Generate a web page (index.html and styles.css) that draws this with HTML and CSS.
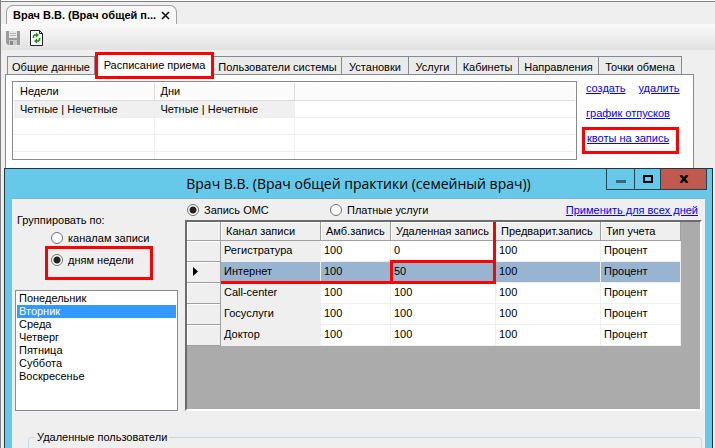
FILE: index.html
```html
<!DOCTYPE html>
<html lang="ru">
<head>
<meta charset="utf-8">
<title>Врач В.В.</title>
<link rel="stylesheet" href="styles.css">
</head>
<body>
<div class="workspace">
  <header class="doc-bar">
    <div class="doc-tab">
      <span class="doc-title">Врач В.В. (Врач общей п...</span>
      <button class="icon-button" aria-label="Закрыть вкладку">
        <svg width="9" height="9" viewBox="0 0 9 9"><path d="M1 1l7 7M8 1L1 8" stroke="#111" stroke-width="1.6"/></svg>
      </button>
    </div>
  </header>
  <div class="toolbar">
    <button class="icon-button" aria-label="Сохранить" disabled>
      <svg width="14" height="14" viewBox="0 0 14 14"><path d="M0 0h14v14H2l-2-2z" fill="#9b9b9b"/><path d="M3 0h8v7H3z" fill="#e8e8e8"/><path d="M4 2.500h6M4 4.500h6" stroke="#b5b5b5"/><path d="M3 9h8v5H3z" fill="#c9c9c9"/><path d="M4 10h3v4H4z" fill="#8c8c8c"/></svg>
    </button>
    <button class="icon-button" aria-label="Обновить">
      <svg width="14" height="16" viewBox="0 0 14 16"><path d="M.5.5h9l3 3v12H.5z" fill="#fff" stroke="#222"/><path d="M9.500.5v3h3z" fill="#ddd" stroke="#222"/><path d="M3.500 8V6l1-1H7" fill="none" stroke="#168a16" stroke-width="1.600"/><path d="M6 2.500l3 2.500-3 2.500z" fill="#168a16"/><path d="M9.500 8v2l-1 1H7" fill="none" stroke="#168a16" stroke-width="1.600"/><path d="M7 8.500v5L4 11z" fill="#168a16"/></svg>
    </button>
  </div>

  <main class="page">
    <nav class="tabs">
      <button class="tab w-general">Общие данные</button>
      <button class="tab tab-active w-schedule">Расписание приема</button>
      <button class="tab w-users">Пользователи системы</button>
      <button class="tab w-setup">Установки</button>
      <button class="tab w-services">Услуги</button>
      <button class="tab w-rooms">Кабинеты</button>
      <button class="tab w-referrals">Направления</button>
      <button class="tab w-points">Точки обмена</button>
    </nav>
    <section class="panel">
      <div class="weeks-box">
        <table class="weeks">
          <thead><tr><th class="week-col">Недели</th><th class="week-col">Дни</th><th></th></tr></thead>
          <tbody>
            <tr class="filled"><td>Четные | Нечетные</td><td>Четные | Нечетные</td><td></td></tr>
            <tr><td></td><td></td><td></td></tr>
            <tr><td></td><td></td><td></td></tr>
            <tr class="last"><td></td><td></td><td></td></tr>
          </tbody>
        </table>
      </div>
      <div class="actions">
        <div class="action-row"><a href="#">создать</a><a href="#">удалить</a></div>
        <a href="#">график отпусков</a>
        <a href="#" class="marked-link">квоты на запись</a>
      </div>
    </section>
  </main>
</div>

<section class="dialog" role="dialog" aria-labelledby="dialog-title">
  <header class="titlebar">
    <h1 id="dialog-title">Врач В.В. (Врач общей практики (семейный врач))</h1>
    <div class="window-buttons">
      <button class="win minimize" aria-label="Свернуть"><svg width="10" height="10" viewBox="0 0 10 10"><path d="M0 6h10v3H0z" fill="#386878"/></svg></button>
      <button class="win maximize" aria-label="Развернуть"><svg width="10" height="8" viewBox="0 0 10 8"><path d="M1 1h8v6H1z" fill="none" stroke="#000" stroke-width="2"/></svg></button>
      <button class="win close" aria-label="Закрыть"><svg width="10" height="8" viewBox="0 0 10 8"><path d="M1.500 0l7 8M8.500 0l-7 8" stroke="#000" stroke-width="2.400"/></svg></button>
    </div>
  </header>
  <div class="dialog-body">
    <div class="columns">
      <div class="grouping">
        <div class="caption">Группировать по:</div>
        <div class="choices">
          <label class="choice"><input type="radio" name="group">каналам записи</label>
          <label class="choice marked-choice"><input type="radio" name="group" checked>дням недели</label>
        </div>
        <select class="days" size="9" aria-label="Дни недели">
          <option>Понедельник</option>
          <option class="picked">Вторник</option>
          <option>Среда</option>
          <option>Четверг</option>
          <option>Пятница</option>
          <option>Суббота</option>
          <option>Воскресенье</option>
        </select>
      </div>
      <div class="quotas">
        <div class="quota-head">
          <label class="choice first-kind"><input type="radio" name="kind" checked>Запись ОМС</label>
          <label class="choice"><input type="radio" name="kind">Платные услуги</label>
          <a href="#">Применить для всех дней</a>
        </div>
        <div class="grid-box">
          <table class="grid">
            <colgroup><col class="c-mark"><col class="c-channel"><col class="c-amb"><col class="c-wide"><col class="c-wide"><col class="c-type"></colgroup>
            <thead><tr><th></th><th>Канал записи</th><th>Амб.запись</th><th class="mark-side">Удаленная запись</th><th>Предварит.запись</th><th>Тип учета</th></tr></thead>
            <tbody>
              <tr><th></th><td>Регистратура</td><td>100</td><td class="mark-side">0</td><td>100</td><td>Процент</td></tr>
              <tr class="current"><th><svg width="5" height="9" viewBox="0 0 5 9"><path d="M0 0l5 4.500L0 9z"/></svg></th><td class="mark-base">Интернет</td><td class="mark-base">100</td><td class="mark-cell">50</td><td>100</td><td>Процент</td></tr>
              <tr><th></th><td>Call-center</td><td>100</td><td>100</td><td>100</td><td>Процент</td></tr>
              <tr><th></th><td>Госуслуги</td><td>100</td><td>100</td><td>100</td><td>Процент</td></tr>
              <tr><th></th><td>Доктор</td><td>100</td><td>100</td><td>100</td><td>Процент</td></tr>
            </tbody>
          </table>
        </div>
      </div>
    </div>
    <fieldset class="removed"><legend>Удаленные пользователи</legend></fieldset>
  </div>
</section>
</body>
</html>
```
FILE: styles.css
```css
* { box-sizing: border-box; }

body {
  margin: 0;
  height: 100vh;
  position: relative;
  overflow: hidden;
  background: #efefef;
  color: #000;
  font: 11px/16px "Liberation Sans", Arial, sans-serif;
}

button, select { font: inherit; color: inherit; }
a { color: #00f; }

.icon-button { display: flex; padding: 0; border: 0; background: none; }

/* Main window */
.workspace {
  height: 100%;
  display: flex;
  flex-direction: column;
  border-left: 1px solid #808080;
}
.doc-bar { height: 24px; padding: 4px 0 0 5px; border-top: 1px solid #fff; box-shadow: inset 0 1px #808080; }
.doc-tab {
  width: 171px;
  height: 19px;
  display: flex;
  align-items: center;
  justify-content: space-between;
  padding: 0 6px;
  border: 1px solid #a0a0a0;
  border-bottom: 0;
  border-radius: 7px 7px 0 0;
  background: #f8f8f8;
}
.doc-title { font-weight: bold; white-space: nowrap; }
.toolbar {
  height: 26px;
  display: flex;
  align-items: center;
  gap: 10px;
  padding: 2px 5px 0;
  background: linear-gradient(#fafafa, #e2e2e2);
}
.page { flex: 1; display: flex; flex-direction: column; padding: 6px 21px 0 4px; }
.tabs { display: flex; height: 18px; padding-left: 2px; }
.tab {
  height: 18px;
  padding: 2px 0 0;
  border: 1px solid #868a92;
  border-bottom: 0;
  border-left: 0;
  background: #ebebeb;
  line-height: 16px;
  white-space: nowrap;
}
.w-general { width: 88px; border-left: 1px solid #868a92; }
.w-schedule { width: 119px; }
.w-users { width: 128px; }
.w-setup { width: 67px; }
.w-services { width: 48px; }
.w-rooms { width: 62px; }
.w-referrals { width: 80px; }
.w-points { width: 83px; }
.tab-active {
  height: 27px;
  margin-top: -4px;
  padding: 0 0 2px;
  border: 3px solid #f00;
  background: #fff;
  z-index: 1;
}
.panel {
  flex: 1;
  display: flex;
  gap: 5px;
  padding: 6px;
  border: 1px solid #868a92;
  border-bottom: 0;
  background: #fff;
}
.weeks-box { flex: 1; height: 79px; padding: 1px; border: 1px solid #868a92; overflow: hidden; }
.weeks { width: 100%; table-layout: fixed; border-collapse: collapse; }
.weeks th, .weeks td {
  height: 17px;
  padding: 0 6px;
  border: 1px solid #eee;
  border-width: 0 1px 1px 0;
  text-align: left;
  font-weight: normal;
  line-height: 16px;
}
.weeks th { background: #fbfbfb; border-color: #ddd; }
.weeks .last td { border-bottom: 0; }
.weeks tr > :last-child { border-right: 0; }
.week-col { width: 140px; }
.filled td { background: #f0f0f0; }
.filled td:last-child { background: #fff; }
.actions { width: 105px; display: flex; flex-direction: column; align-items: flex-start; }
.actions > a { margin: 9px 0 0 4px; white-space: nowrap; }
.action-row { display: flex; gap: 13px; padding-left: 4px; height: 15px; line-height: 14px; }
.actions > .marked-link { width: 97px; height: 27px; margin: 6px 0 0; padding: 0 0 0 2px; border: 3px solid #f00; }

/* Dialog */
.dialog {
  position: absolute;
  inset: 168px 2px 0 4px;
  display: flex;
  flex-direction: column;
  padding: 0 7px;
  border: 1px solid #26343b;
  border-bottom: 0;
  background: #66c9ea;
}
.titlebar { position: relative; height: 29px; display: flex; justify-content: center; }
.titlebar h1 { margin: 0; font: 14px/30px "Open Sans", "Noto Sans", sans-serif; white-space: nowrap; }
.window-buttons { position: absolute; top: 0; right: -2px; display: flex; }
.win {
  width: 28px;
  height: 21px;
  display: flex;
  align-items: center;
  justify-content: center;
  padding: 0;
  border: 1px solid #24444f;
  border-width: 0 0 1px 1px;
  background: none;
}
.maximize { width: 26px; }
.close { width: 47px; border-right-width: 1px; background: #c1594f; }
.dialog-body { flex: 1; overflow: hidden; padding: 1px 3px 0; border-top: 1px solid #7fb2c6; background: #efefef; }
.columns { display: flex; gap: 7px; }
.grouping { width: 163px; }
.caption { padding: 12px 2px 0; }
.choice { display: flex; align-items: center; gap: 5px; white-space: nowrap; }
.choice input {
  appearance: none;
  width: 12px;
  height: 12px;
  margin: 0;
  border: 1px solid #707070;
  border-radius: 50%;
  background: #fff;
}
.choice input:checked { background: radial-gradient(circle, #222 3px, #fff 4px); }
.choices { padding: 2px 0 0 30px; }
.choices .choice { padding-left: 6px; }
.choices .marked-choice { width: 108px; height: 34px; padding: 0 0 7px 3px; border: 3px solid #f00; }
.days {
  width: 100%;
  height: 121px;
  display: block;
  margin-top: 10px;
  padding: 1px;
  border: 1px solid #868a92;
  border-radius: 0;
  background: #fff;
  overflow: hidden;
}
.days option { min-height: 13px; height: 13px; padding: 0 2px; line-height: 13px; }
.days .picked { background: #3399ff; color: #fff; }
.quotas { flex: 1; min-width: 0; }
.quota-head { height: 20px; display: flex; align-items: center; padding: 0 4px 0 2px; }
.first-kind { width: 143px; }
.quota-head a { margin-left: auto; white-space: nowrap; }
.grid-box {
  height: 191px;
  border: 2px solid #6c6c6c;
  border-color: #6c6c6c #fff #fff #6c6c6c;
  background: #ababab;
}
.grid { width: 494px; table-layout: fixed; border-collapse: separate; border-spacing: 0; }
.c-mark { width: 34px; }
.c-channel { width: 100px; }
.c-amb { width: 70px; }
.c-wide { width: 105px; }
.c-type { width: 80px; }
.grid th, .grid td {
  position: relative;
  height: 21px;
  padding: 0 0 2px 3px;
  border: 1px solid #efefef;
  border-width: 0 1px 1px 0;
  background: #fff;
  font-weight: normal;
  line-height: 16px;
  text-align: left;
  white-space: nowrap;
}
.grid th { background: #efefef; border-color: #a0a0a0; box-shadow: inset 1px 1px #fff; }
.grid thead th { height: 19px; padding: 0 0 0 5px; }
.grid tbody th { padding-left: 6px; }
.grid td:nth-child(2) { background: #efefef; }
.grid .current td { background: #99b4d1; }
.grid svg { display: block; }

/* Red marker strokes drawn over the cells */
.mark-side::after, .mark-base::after, .mark-cell::after { content: ""; position: absolute; z-index: 1; }
.mark-side::after { inset: 0 -1px -1px auto; width: 3px; background: #f00; }
.mark-base::after { inset: auto -1px -2px 0; height: 3px; background: #f00; }
.mark-cell::after { inset: -2px -1px -2px -1px; border: 3px solid #f00; }

.removed { height: 60px; margin: 18px 0 0 13px; padding: 0; border: 1px solid #d0d8e0; border-radius: 3px; }
.removed legend { margin-left: 6px; padding: 0 2px; }
```
